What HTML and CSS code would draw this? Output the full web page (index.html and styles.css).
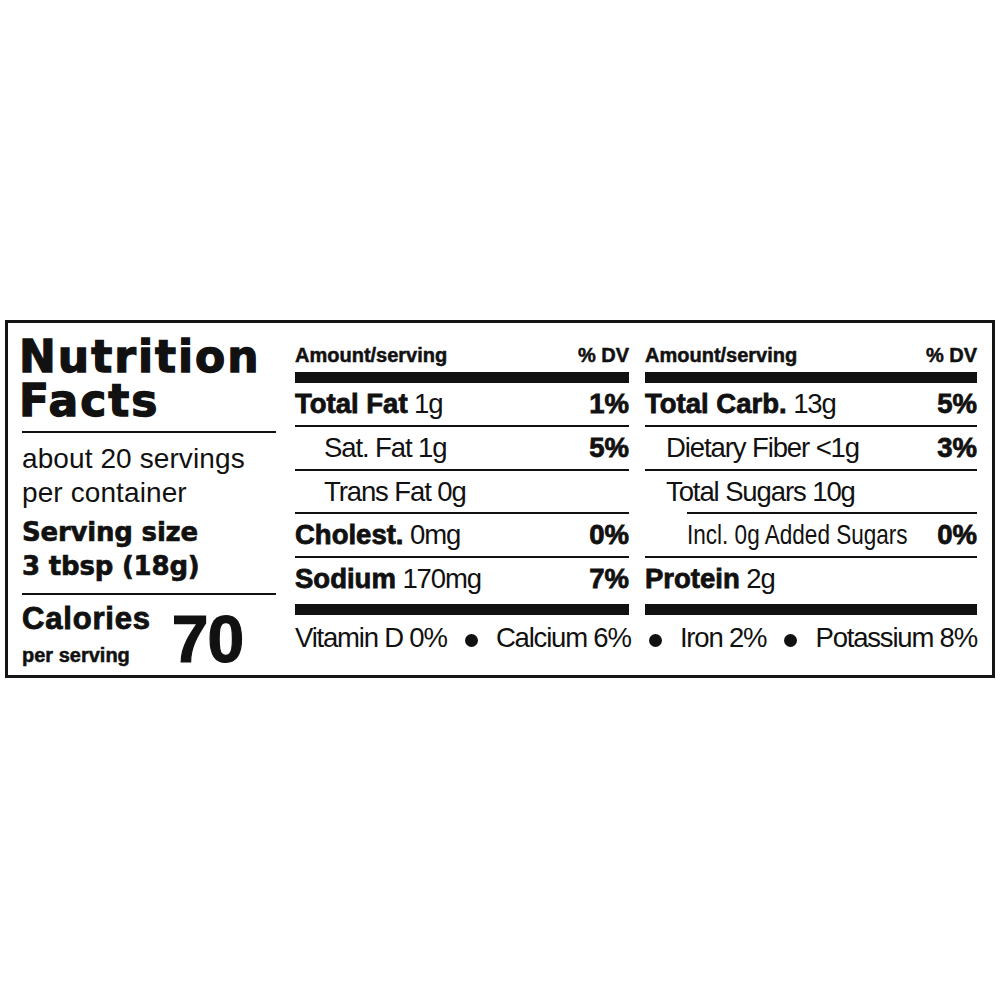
FILE: index.html
```html
<!DOCTYPE html>
<html lang="en">
<head>
<meta charset="utf-8">
<title>Nutrition Facts</title>
<link rel="stylesheet" href="styles.css">
</head>
<body>
<div class="label">
  <div class="summary">
    <div class="title"><div class="title-line">Nutrition</div><div class="title-line">Facts</div></div>
    <div class="servings">about 20 servings<br>per container</div>
    <div class="size">Serving size<br>3 tbsp (18g)</div>
    <div class="calories">
      <div class="cal-text">
        <div class="cal-label">Calories</div>
        <div class="cal-sub">per serving</div>
      </div>
      <div class="cal-num">70</div>
    </div>
  </div>
  <div class="details">
    <div class="columns">
      <div class="col">
        <div class="head"><span>Amount/serving</span><span>% DV</span></div>
        <div class="bar"></div>
        <div class="row first"><span><b>Total Fat</b> 1g</span><b>1%</b></div>
        <div class="row"><span class="indent">Sat. Fat 1g</span><b>5%</b></div>
        <div class="row"><span class="indent">Trans Fat 0g</span></div>
        <div class="row"><span><b>Cholest.</b> 0mg</span><b>0%</b></div>
        <div class="row"><span><b>Sodium</b> 170mg</span><b>7%</b></div>
        <div class="bar bar-bottom"></div>
      </div>
      <div class="col">
        <div class="head"><span>Amount/serving</span><span>% DV</span></div>
        <div class="bar"></div>
        <div class="row first"><span><b>Total Carb.</b> 13g</span><b>5%</b></div>
        <div class="row"><span class="indent-sm">Dietary Fiber &lt;1g</span><b>3%</b></div>
        <div class="row"><span class="indent-sm">Total Sugars 10g</span></div>
        <div class="row sub"><span class="narrow"><span class="narrow-inner">Incl. 0g Added Sugars</span></span><b>0%</b></div>
        <div class="row"><span><b>Protein</b> 2g</span></div>
        <div class="bar bar-bottom"></div>
      </div>
    </div>
    <div class="vitamins">
      <span>Vitamin D 0%</span>
      <span class="dot"></span>
      <span>Calcium 6%</span>
      <span class="dot"></span>
      <span>Iron 2%</span>
      <span class="dot"></span>
      <span>Potassium 8%</span>
    </div>
  </div>
</div>
</body>
</html>
```

FILE: styles.css
```css
html, body {
  margin: 0;
  padding: 0;
  background: #ffffff;
}

body {
  color: #111111;
  font-family: "Liberation Sans", Arial, sans-serif;
}

b {
  font-weight: bold;
  -webkit-text-stroke: 0.8px #111111;
}

.label {
  box-sizing: border-box;
  width: 990px;
  height: 358px;
  margin: 320px 0 0 5px;
  border: 3px solid #151515;
  padding: 0 15px 0 14px;
  display: flex;
}

/* left summary column */
.summary {
  width: 254px;
  flex: none;
  padding-top: 13px;
}

.title {
  font-family: "DejaVu Sans", sans-serif;
  font-weight: bold;
  font-size: 44px;
  letter-spacing: 2px;
  padding-bottom: 7px;
  border-bottom: 2px solid #111111;
  -webkit-text-stroke: 1.3px #111111;
}

.title-line {
  height: 44px;
  line-height: 42px;
  margin-left: -3px;
}

.servings {
  font-size: 28px;
  line-height: 34px;
  letter-spacing: 0.1px;
  padding-top: 9px;
}

.size {
  margin-top: 5px;
  font-family: "DejaVu Sans", sans-serif;
  font-weight: bold;
  font-size: 26px;
  line-height: 34px;
  letter-spacing: -0.2px;
  padding-bottom: 10px;
  border-bottom: 2px solid #111111;
  -webkit-text-stroke: 0.6px #111111;
}

.calories {
  display: flex;
  align-items: flex-end;
  padding-top: 8px;
}

.cal-label {
  font-weight: bold;
  font-size: 31px;
  line-height: 32px;
  letter-spacing: 0.8px;
  -webkit-text-stroke: 0.9px #111111;
}

.cal-sub {
  margin-top: 8.5px;
  font-weight: bold;
  font-size: 20px;
  line-height: 22px;
  -webkit-text-stroke: 0.5px #111111;
}

.cal-num {
  margin-left: 21px;
  font-weight: bold;
  font-size: 66px;
  line-height: 54px;
  letter-spacing: -1px;
  -webkit-text-stroke: 1.2px #111111;
}

/* right details */
.details {
  width: 682px;
  flex: none;
  margin-left: 19px;
  padding-top: 20px;
}

.columns {
  display: grid;
  grid-template-columns: 334px 332px;
  column-gap: 16px;
}

.head {
  display: flex;
  justify-content: space-between;
  font-weight: bold;
  font-size: 20px;
  line-height: 24px;
  -webkit-text-stroke: 0.5px #111111;
}

.bar {
  height: 11px;
  margin-top: 5px;
  background: #111111;
}

.bar-bottom {
  margin-top: 4.6px;
}

.row {
  box-sizing: border-box;
  height: 43.6px;
  border-top: 2px solid #111111;
  display: flex;
  justify-content: space-between;
  align-items: baseline;
  font-size: 27.5px;
  line-height: 41.6px;
  letter-spacing: -1.1px;
  white-space: nowrap;
}

.row b {
  letter-spacing: 0;
}

.row.first {
  height: 42px;
  border-top: none;
  line-height: 42px;
}

.row.sub {
  margin-left: 42px;
}

.indent {
  padding-left: 29px;
}

.indent-sm {
  padding-left: 21px;
}

.narrow {
  display: inline-block;
  width: 217px;
  letter-spacing: 0;
}

.narrow-inner {
  display: inline-block;
  transform: scaleX(0.82);
  transform-origin: 0 50%;
}

.vitamins {
  display: flex;
  justify-content: space-between;
  align-items: baseline;
  padding-top: 3px;
  font-size: 27.5px;
  line-height: 40px;
  letter-spacing: -1.2px;
  white-space: nowrap;
}

.dot {
  width: 13px;
  height: 13px;
  border-radius: 50%;
  background: #111111;
  margin-bottom: 4px;
}
```
